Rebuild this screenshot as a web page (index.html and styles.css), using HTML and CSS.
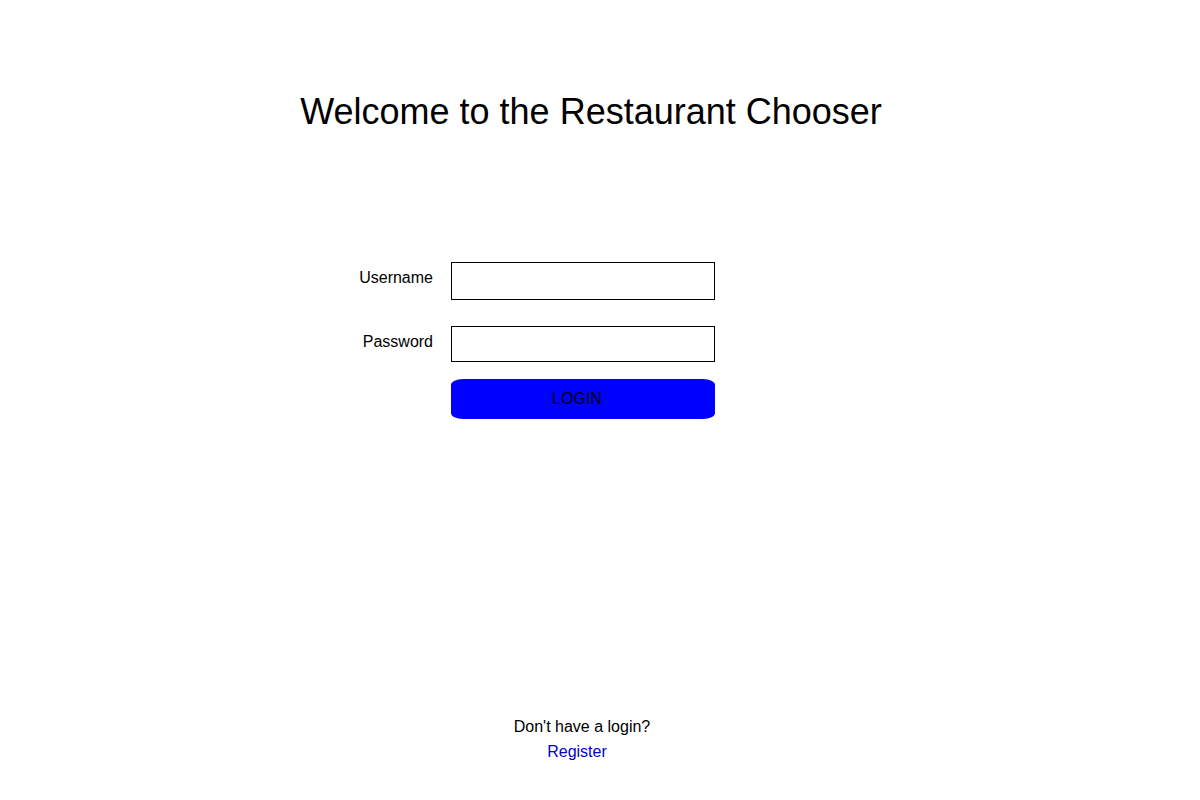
FILE: index.html
```html
<!DOCTYPE html>
<html lang="en">
<head>
<meta charset="utf-8">
<meta name="viewport" content="width=device-width, initial-scale=1">
<title>Restaurant Chooser</title>
<link rel="stylesheet" href="styles.css">
</head>
<body>
<main class="page">
  <h1 class="title">Welcome to the Restaurant Chooser</h1>
  <form class="login">
    <label class="label" for="username">Username</label>
    <input class="field" id="username" name="username" type="text">
    <label class="label" for="password">Password</label>
    <input class="field" id="password" name="password" type="password">
    <button class="submit" type="submit">LOGIN</button>
  </form>
  <footer class="signup">
    <p class="prompt">Don't have a login?</p>
    <a class="register" href="#register">Register</a>
  </footer>
</main>
</body>
</html>
```
FILE: styles.css
```css
* {
  box-sizing: border-box;
}

body {
  margin: 0;
  background: #fff;
  color: #000;
  font: 16px/20px "Liberation Sans", Arial, sans-serif;
}

.page {
  display: flex;
  flex-direction: column;
  align-items: center;
  min-height: 100vh;
  padding: 90px 18px 38px 0;
}

.title {
  margin: 0;
  font-size: 36px;
  line-height: 44px;
  font-weight: 400;
}

.login {
  display: grid;
  grid-template-columns: 82px 264px;
  column-gap: 18px;
  justify-content: center;
  padding-right: 116px;
  margin-top: 128px;
}

.label {
  padding-top: 6px;
  text-align: right;
}

.field {
  width: 100%;
  height: 38px;
  margin-bottom: 26px;
  padding: 0 8px;
  border: 1px solid #000;
  border-radius: 0;
  background: #fff;
  font: inherit;
}

.field[type="password"] {
  height: 36px;
  margin-bottom: 17px;
}

.submit {
  grid-column: 2;
  height: 40px;
  padding: 0 12px 0 0;
  border: 0;
  border-radius: 12px / 6px;
  background: #00f;
  color: #000;
  font: inherit;
}

.signup {
  display: flex;
  flex-direction: column;
  align-items: center;
  gap: 5px;
  padding-right: 18px;
  margin-top: auto;
}

.prompt {
  margin: 0;
}

.register {
  padding-right: 10px;
  color: #0000d0;
  text-decoration: none;
}
```
